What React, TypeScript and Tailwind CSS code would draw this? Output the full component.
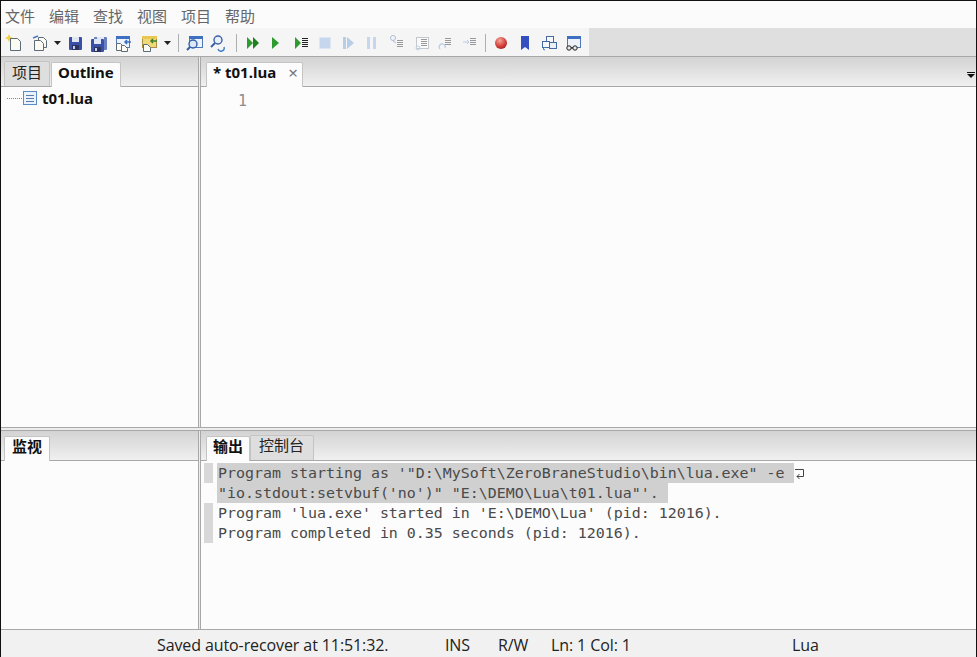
import React from "react";

const S = ({ children, className = "" }: { children: React.ReactNode; className?: string }) => (
  <svg width="18" height="18" viewBox="0 0 18 18" className={"shrink-0 " + className}>{children}</svg>
);
const Arrow = ({ className = "" }: { className?: string }) => (
  <svg width="7" height="4" viewBox="0 0 7 4" className={"shrink-0 " + className}><path d="M0 0h7L3.5 4z" fill="#222" /></svg>
);
const Sep = ({ className = "" }: { className?: string }) => <div className={"h-[18px] w-px shrink-0 bg-[#aeb0b0] " + className} />;

const Lines = ({ x = 10, y = 5, c = "#777" }: { x?: number; y?: number; c?: string }) => (
  <path d={`M${x} ${y + 0.5}h6M${x} ${y + 2.5}h6M${x} ${y + 4.5}h6M${x} ${y + 6.5}h6`} stroke={c} strokeWidth="1" fill="none" />
);

const Page = (p: { x: number; y: number; w?: number; h?: number; c?: string }) => (
  <path d={`M${p.x + 0.5} ${p.y + 0.5}h${(p.w ?? 9) - 3}l3 3v${(p.h ?? 12) - 3}h-${p.w ?? 9}z`} fill="#fbfbf4" stroke={p.c ?? "#5d6a78"} strokeWidth="1" />
);

const Floppy = ({ x = 2, c = "#3a4fa8" }: { x?: number; c?: string }) => (
  <g>
    <rect x={x} y="3" width="13" height="13" rx="1" fill={c} />
    <rect x={x + 3} y="3" width="7" height="5" fill="#dfe6f4" />
    <rect x={x + 3} y="11" width="7" height="5" fill="#2a3360" />
    <rect x={x + 4} y="12" width="2" height="3" fill="#c8d0e8" />
  </g>
);

const Win = ({ x = 3, y = 2 }: { x?: number; y?: number }) => (
  <g>
    <rect x={x + 0.5} y={y + 0.5} width="13" height="11" fill="#eef3fb" stroke="#4e78b8" />
    <rect x={x} y={y} width="14" height="3" fill="#3f6fc0" />
  </g>
);

const icons: { el: React.ReactNode; ml: string }[] = [
  { ml: "ml-[4px]", el: <S><path d="M4 0l1.3 2.7L8 4 5.3 5.3 4 8 2.7 5.3 0 4l2.7-1.3z" fill="#f0d040" /><Page x={5} y={4} w={10} h={12} /></S> },
  { ml: "ml-[8px]", el: <S><Page x={7} y={3} w={8} h={10} /><Page x={3} y={6} w={9} h={10} /><path d="M2 4l5-2" stroke="#4a7bc0" strokeWidth="1.5" /></S> },
  { ml: "ml-[5px]", el: <Arrow /> },
  { ml: "ml-[6px]", el: <S><Floppy x={2} /></S> },
  { ml: "ml-[5px]", el: <S><Floppy x={4} c="#6a7fc0" /><g transform="translate(-3 2)"><Floppy x={4} /></g></S> },
  { ml: "ml-[6px]", el: <S><Win x={2} y={2} /><Page x={2} y={9} w={7} h={7} /><Page x={7} y={11} w={6} h={6} /><path d="M17 8h-6m2-2l-2 2 2 2" stroke="#3f6fc0" strokeWidth="1.5" fill="none" /></S> },
  { ml: "ml-[8px]", el: <S><rect x="2.5" y="3.5" width="14" height="10" fill="#f0d878" stroke="#a89040" /><rect x="2" y="2" width="15" height="3" fill="#e8c850" /><Page x={3} y={10} w={7} h={7} /><path d="M17 7h-6m2-2l-2 2 2 2" stroke="#3f7f30" strokeWidth="1.5" fill="none" /></S> },
  { ml: "ml-[6px]", el: <Arrow /> },
  { ml: "ml-[7px]", el: <Sep /> },
  { ml: "ml-[7px]", el: <S><Win x={3} y={2} /><circle cx="7" cy="10" r="4" fill="#dce8f8" stroke="#2f5fa8" strokeWidth="1.4" /><path d="M4 13l-3 3" stroke="#2f5fa8" strokeWidth="2" /></S> },
  { ml: "ml-[5px]", el: <S><circle cx="9" cy="6" r="4" fill="#e8f0fa" stroke="#3c5fa8" strokeWidth="1.4" /><path d="M6 9l-4 4" stroke="#3c5fa8" strokeWidth="2" /><path d="M9 15a3 3 0 0 0 6-2" stroke="#3f7fc8" strokeWidth="1.4" fill="none" /></S> },
  { ml: "ml-[9px]", el: <Sep /> },
  { ml: "ml-[7px]", el: <S><path d="M3 3l6 6-6 6z" fill="#2f9a2f" /><path d="M9 3l6 6-6 6z" fill="#1f7f1f" /></S> },
  { ml: "ml-[5px]", el: <S><path d="M5 3l7 6-7 6z" fill="#2f9a2f" /></S> },
  { ml: "ml-[8px]", el: <S><path d="M2 3l6 6-6 6z" fill="#2f9a2f" /><Lines x={9} y={4} c="#222" /><path d="M9 12.5h6" stroke="#222" /></S> },
  { ml: "ml-[5px]", el: <S><rect x="3.5" y="3.5" width="11" height="11" fill="#c6d6ec" stroke="#dce6f4" /></S> },
  { ml: "ml-[6px]", el: <S><path d="M3 3h3v12H3z" fill="#b8cde8" /><path d="M7 3l7 6-7 6z" fill="#b8cde8" /></S> },
  { ml: "ml-[5px]", el: <S><rect x="4" y="3" width="3" height="12" fill="#c6d6ec" /><rect x="10" y="3" width="3" height="12" fill="#c6d6ec" /></S> },
  { ml: "ml-[8px]", el: <S><circle cx="4" cy="4" r="2.5" fill="none" stroke="#aebfd8" /><path d="M4 7l3 2" stroke="#aebfd8" /><Lines x={8} y={6} c="#999" /></S> },
  { ml: "ml-[6px]", el: <S><rect x="3.5" y="3.5" width="12" height="11" fill="#fafafa" stroke="#c4c8cc" /><Lines x={8} y={5} c="#999" /><circle cx="5" cy="14" r="2" fill="none" stroke="#c4d2e6" /></S> },
  { ml: "ml-[6px]", el: <S><Lines x={8} y={4} c="#999" /><path d="M8 14a3 3 0 1 0-5 1" stroke="#b8cce4" fill="none" strokeWidth="1.2" /></S> },
  { ml: "ml-[7px]", el: <S><Lines x={8} y={4} c="#999" /><path d="M1 8h6m-2-2l2 2-2 2" stroke="#b8cce4" fill="none" /></S> },
  { ml: "ml-[5px]", el: <Sep /> },
  { ml: "ml-[6px]", el: <S><defs><radialGradient id="rb" cx="0.4" cy="0.3" r="0.8"><stop offset="0" stopColor="#f0a8a0" /><stop offset="0.6" stopColor="#d84038" /><stop offset="1" stopColor="#902020" /></radialGradient></defs><circle cx="9" cy="9" r="6" fill="url(#rb)" /></S> },
  { ml: "ml-[6px]", el: <S><path d="M5 2h8v14l-4-3-4 3z" fill="#3450c0" /></S> },
  { ml: "ml-[6px]", el: <S><rect x="6.5" y="2.5" width="7" height="6" fill="#f4f8fc" stroke="#46689c" /><rect x="2.5" y="7.5" width="7" height="6" fill="#f4f8fc" stroke="#46689c" /><rect x="9.5" y="8.5" width="7" height="6" fill="#e8f0f8" stroke="#46689c" /><path d="M5 16l-2-1 2-2" stroke="#3f7fc8" fill="none" /></S> },
  { ml: "ml-[6px]", el: <S><Win x={3} y={2} /><circle cx="5" cy="14" r="2.2" fill="#e8e8e8" stroke="#222" /><circle cx="11" cy="14" r="2.2" fill="#e8e8e8" stroke="#222" /><path d="M7 14h2" stroke="#222" /></S> },
];

const sans = "font-['Noto_Sans','Noto_Sans_CJK_SC',sans-serif]";
const cjk = "font-['Noto_Sans_CJK_SC',sans-serif]";
const tabBar = "bg-gradient-to-b from-[#d3d3d3] to-[#f0f0f0]";

const Tab = ({ label, active, close, className = "", font = sans }: { label: string; active?: boolean; close?: boolean; className?: string; font?: string }) => (
  <div className={`flex h-full items-center rounded-t-[2px] border border-b-0 text-[15px] leading-none ${font} ${active ? "z-10 -mb-px border-[#c4c4c4] bg-[#fcfcfc] font-bold text-[#111]" : "border-[#c4c4c4] bg-[#dedede] text-[#222]"} ${className}`}>
    <span>{label}</span>
    {close && <span className="ml-[12px] text-[17px] font-normal leading-none text-[#777]">×</span>}
  </div>
);

const OutputLine = ({ marker = true, children, hl }: { marker?: boolean; children: React.ReactNode; hl?: boolean }) => (
  <div className="flex h-5 items-stretch">
    <div className={`w-[9px] ${marker ? "bg-[#d8d8d8]" : ""}`} />
    <div className="w-1" />
    <div className={`whitespace-pre pl-px ${hl ? "bg-[#d0d0d0]" : ""}`}>{children}</div>
  </div>
);

export default function App() {
  return (
    <div className="flex h-[657px] w-[977px] flex-col overflow-hidden border-x border-t border-x-[#111] border-t-[#111] bg-[#fbfbfb]">
      <div className={`flex h-[27px] shrink-0 items-center gap-[14px] pl-[4px] pt-[4px] text-[15px] text-[#666] ${cjk}`}>
        {["文件", "编辑", "查找", "视图", "项目", "帮助"].map((m) => <span key={m} className="w-[30px]">{m}</span>)}
      </div>
      <div className="flex h-[28px] shrink-0 bg-[#dfdfdf]">
        <div className="flex w-[588px] items-center bg-[#f5f5f5] pt-[2px]">
          {icons.map((i, n) => <div key={n} className={`flex items-center ${i.ml}`}>{i.el}</div>)}
        </div>
      </div>
      <div className="h-px shrink-0 bg-[#a8a8a8]" />

      <div className="flex min-h-0 flex-1 flex-col">
        <div className="flex h-[370px] shrink-0">
          <div className="flex w-[197px] shrink-0 flex-col">
            <div className={`flex h-[29px] shrink-0 items-end gap-px pl-[3px] pt-[4px] ${tabBar}`}>
              <Tab label="项目" font={cjk} className="px-[7px] pb-[5px]" />
              <Tab label="Outline" active className="px-[6px] pb-[5px]" />
            </div>
            <div className="h-px shrink-0 bg-[#a8a8a8]" />
            <div className="flex flex-1 items-start bg-[#fcfcfc] pt-[2px]">
              <div className="ml-[6px] mt-[9px] w-[15px] border-t border-dotted border-[#888]" />
              <svg width="16" height="16" viewBox="0 0 16 16" className="mt-[1px] shrink-0"><rect x="1.5" y="1.5" width="13" height="13" fill="#eaf2fb" stroke="#5a8cc8" /><path d="M4 5.5h8M4 8.5h8M4 11.5h8" stroke="#5a7ca8" /></svg>
              <span className={`ml-[4px] text-[15px] font-bold leading-[18px] text-[#111] ${sans}`}>t01.lua</span>
            </div>
          </div>
          <div className="w-[3px] shrink-0 border-x border-[#a8a8a8] bg-[#ececec]" />
          <div className="flex min-w-0 flex-1 flex-col">
            <div className={`relative flex h-[29px] shrink-0 items-end pl-[5px] pt-[4px] ${tabBar}`}>
              <Tab label="* t01.lua" active close className="pl-[6px] pr-[4px] pb-[5px]" />
              <svg width="8" height="7" viewBox="0 0 8 7" className="absolute bottom-[7px] right-[1px]"><path d="M0 0h8v1H0zM0 2h8L4 6z" fill="#111" /></svg>
            </div>
            <div className="h-px shrink-0 bg-[#a8a8a8]" />
            <div className="flex-1 bg-[#fcfcfc] pl-[37px] pt-[4px] font-['DejaVu_Sans_Mono',monospace] text-[15px] leading-5 text-[#8c8c8c]">1</div>
          </div>
        </div>
        <div className="h-[4px] shrink-0 border-y border-[#a8a8a8] bg-[#ececec]" />
        <div className="flex min-h-0 flex-1">
          <div className="flex w-[197px] shrink-0 flex-col">
            <div className={`flex h-[29px] shrink-0 items-end pl-[3px] pt-[4px] ${tabBar}`}>
              <Tab label="监视" active font={cjk} className="px-[7px] pb-[7px]" />
            </div>
            <div className="h-px shrink-0 bg-[#a8a8a8]" />
            <div className="flex-1 bg-[#fcfcfc]" />
          </div>
          <div className="w-[3px] shrink-0 border-x border-[#a8a8a8] bg-[#ececec]" />
          <div className="flex min-w-0 flex-1 flex-col">
            <div className={`flex h-[29px] shrink-0 items-end pl-[5px] pt-[4px] ${tabBar}`}>
              <Tab label="输出" active font={cjk} className="px-[6px] pb-[7px]" />
              <Tab label="控制台" font={cjk} className="pl-[8px] pr-[9px] pb-[7px]" />
            </div>
            <div className="h-px shrink-0 bg-[#a8a8a8]" />
            <div className="flex-1 bg-[#fcfcfc] pl-[3px] pt-[2px] font-['DejaVu_Sans_Mono',monospace] text-[14.95px] leading-5 text-[#4a4a4a]">
              <div className="flex">
                <OutputLine hl>{`Program starting as '"D:\\MySoft\\ZeroBraneStudio\\bin\\lua.exe" -e `}</OutputLine>
                <svg width="11" height="13" viewBox="0 0 11 13" className="mt-[5px]"><path d="M1 1.5h8.5v7H3m2.5-2.5L3 8.5 5.5 11" stroke="#444" fill="none" /></svg>
              </div>
              <OutputLine marker={false} hl>{`"io.stdout:setvbuf('no')" "E:\\DEMO\\Lua\\t01.lua"'. `}</OutputLine>
              <OutputLine>{`Program 'lua.exe' started in 'E:\\DEMO\\Lua' (pid: 12016).`}</OutputLine>
              <OutputLine>{`Program completed in 0.35 seconds (pid: 12016).`}</OutputLine>
            </div>
          </div>
        </div>
      </div>

      <div className="flex h-[28px] shrink-0 items-center border-t border-[#a8a8a8] bg-[#f1f1f1] pl-[156px] pt-[2px] font-['Open_Sans',sans-serif] text-[16px] tracking-[-0.1px] text-[#222]">
        <span className="w-[288px] whitespace-nowrap">Saved auto-recover at 11:51:32.</span>
        <span className="w-[53px]">INS</span>
        <span className="w-[53px]">R/W</span>
        <span className="w-[241px] whitespace-nowrap">Ln: 1 Col: 1</span>
        <span>Lua</span>
      </div>
    </div>
  );
}
